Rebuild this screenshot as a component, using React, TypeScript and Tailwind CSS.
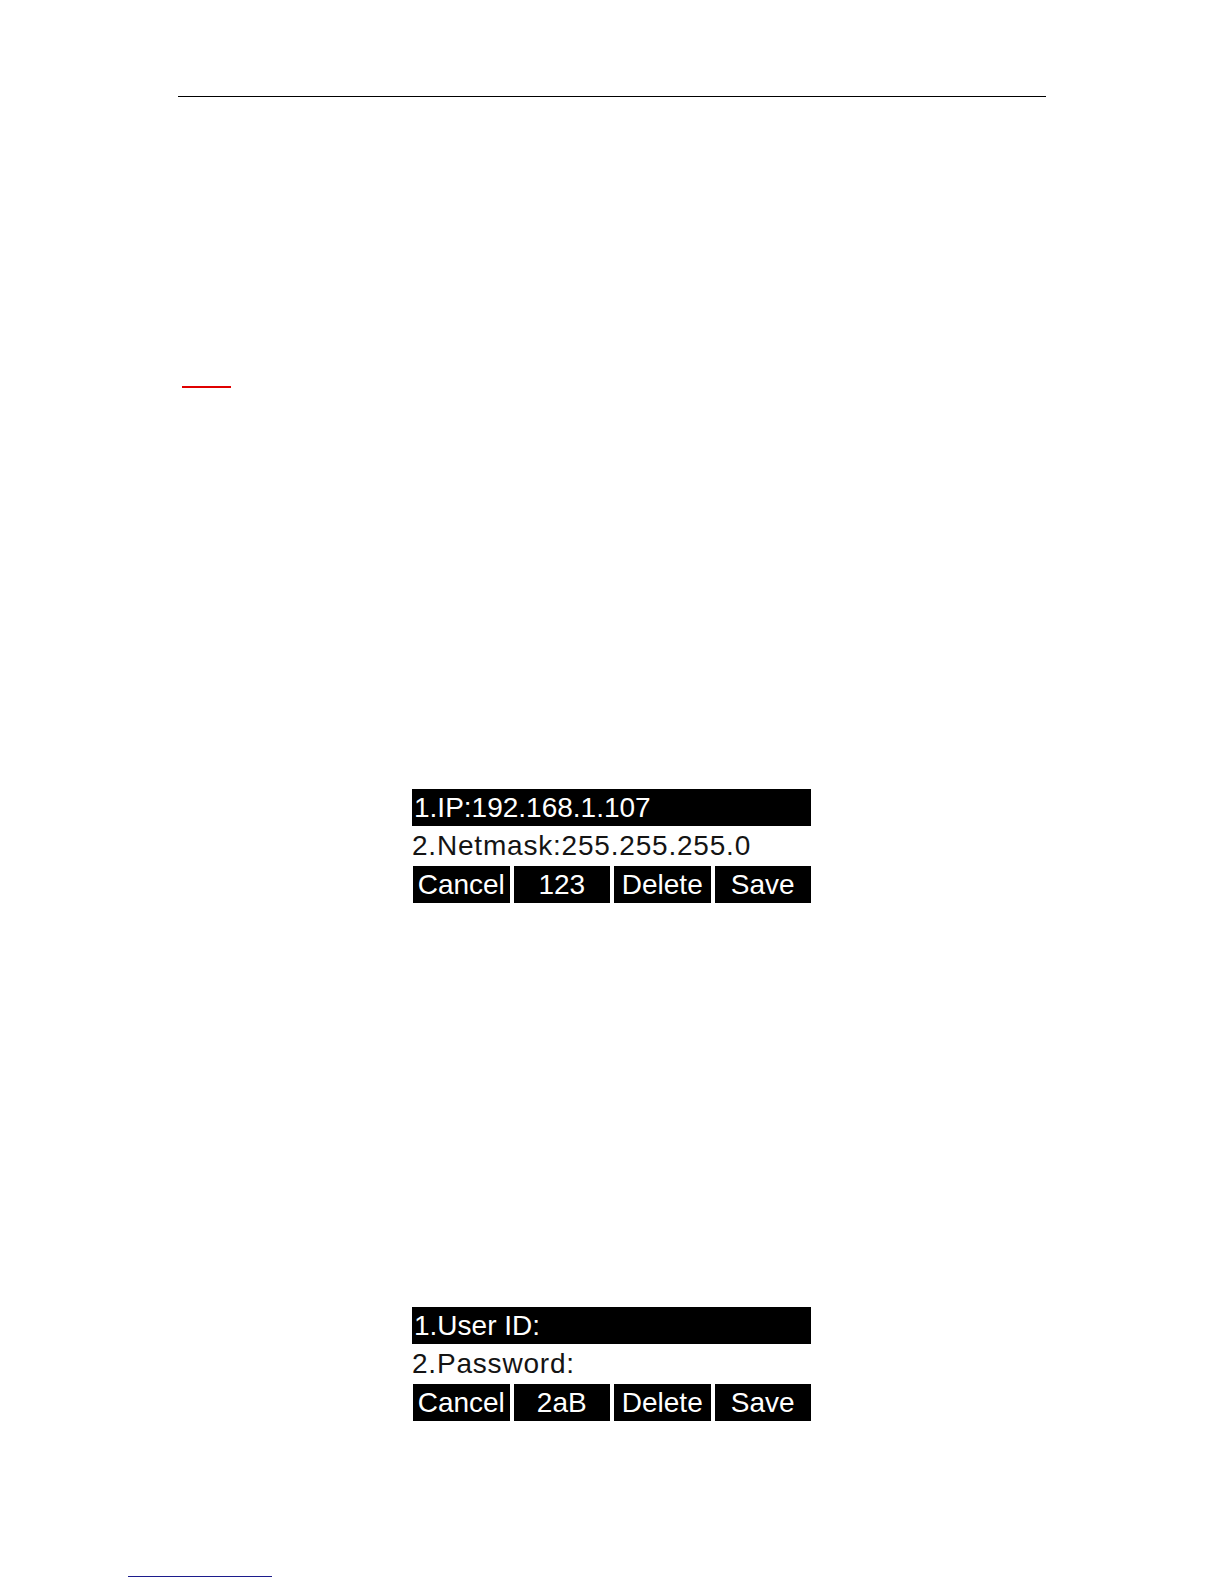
import React from "react";

const font = { fontFamily: '"Liberation Sans", Arial, sans-serif' };

function Screen({ row1, row2, mode }: { row1: string; row2: string; mode: string }) {
  const keys = ["Cancel", mode, "Delete", "Save"];
  return (
    <div className="w-[399px] flex flex-col text-[28px]" style={font}>
      <div className="h-[37px] bg-black text-white pl-[2px] flex items-center leading-none whitespace-nowrap">
        {row1}
      </div>
      <div className="h-[40px] bg-white text-[#141414] flex items-center leading-none whitespace-nowrap tracking-[0.8px]">
        {row2}
      </div>
      <div className="h-[37px] grid grid-cols-4 gap-[4px] pl-[1px]">
        {keys.map((k) => (
          <div key={k} className="bg-black text-white flex items-center justify-center leading-none whitespace-nowrap">
            {k}
          </div>
        ))}
      </div>
    </div>
  );
}

export default function App() {
  return (
    <div className="w-[1224px] h-[1584px] bg-white flex flex-col">
      <div className="mt-[96px] ml-[178px] w-[868px] h-[1px] bg-black" />
      <div className="mt-[289px] ml-[182px] w-[49px] h-[2px] bg-[#e00000]" />
      <div className="mt-[401px] ml-[412px]">
        <Screen row1="1.IP:192.168.1.107" row2="2.Netmask:255.255.255.0" mode="123" />
      </div>
      <div className="mt-[404px] ml-[412px]">
        <Screen row1="1.User ID:" row2="2.Password:" mode="2aB" />
      </div>
      <div className="mt-[155px] ml-[128px] w-[144px] h-[1px] bg-[#1c1c8c]" />
    </div>
  );
}
